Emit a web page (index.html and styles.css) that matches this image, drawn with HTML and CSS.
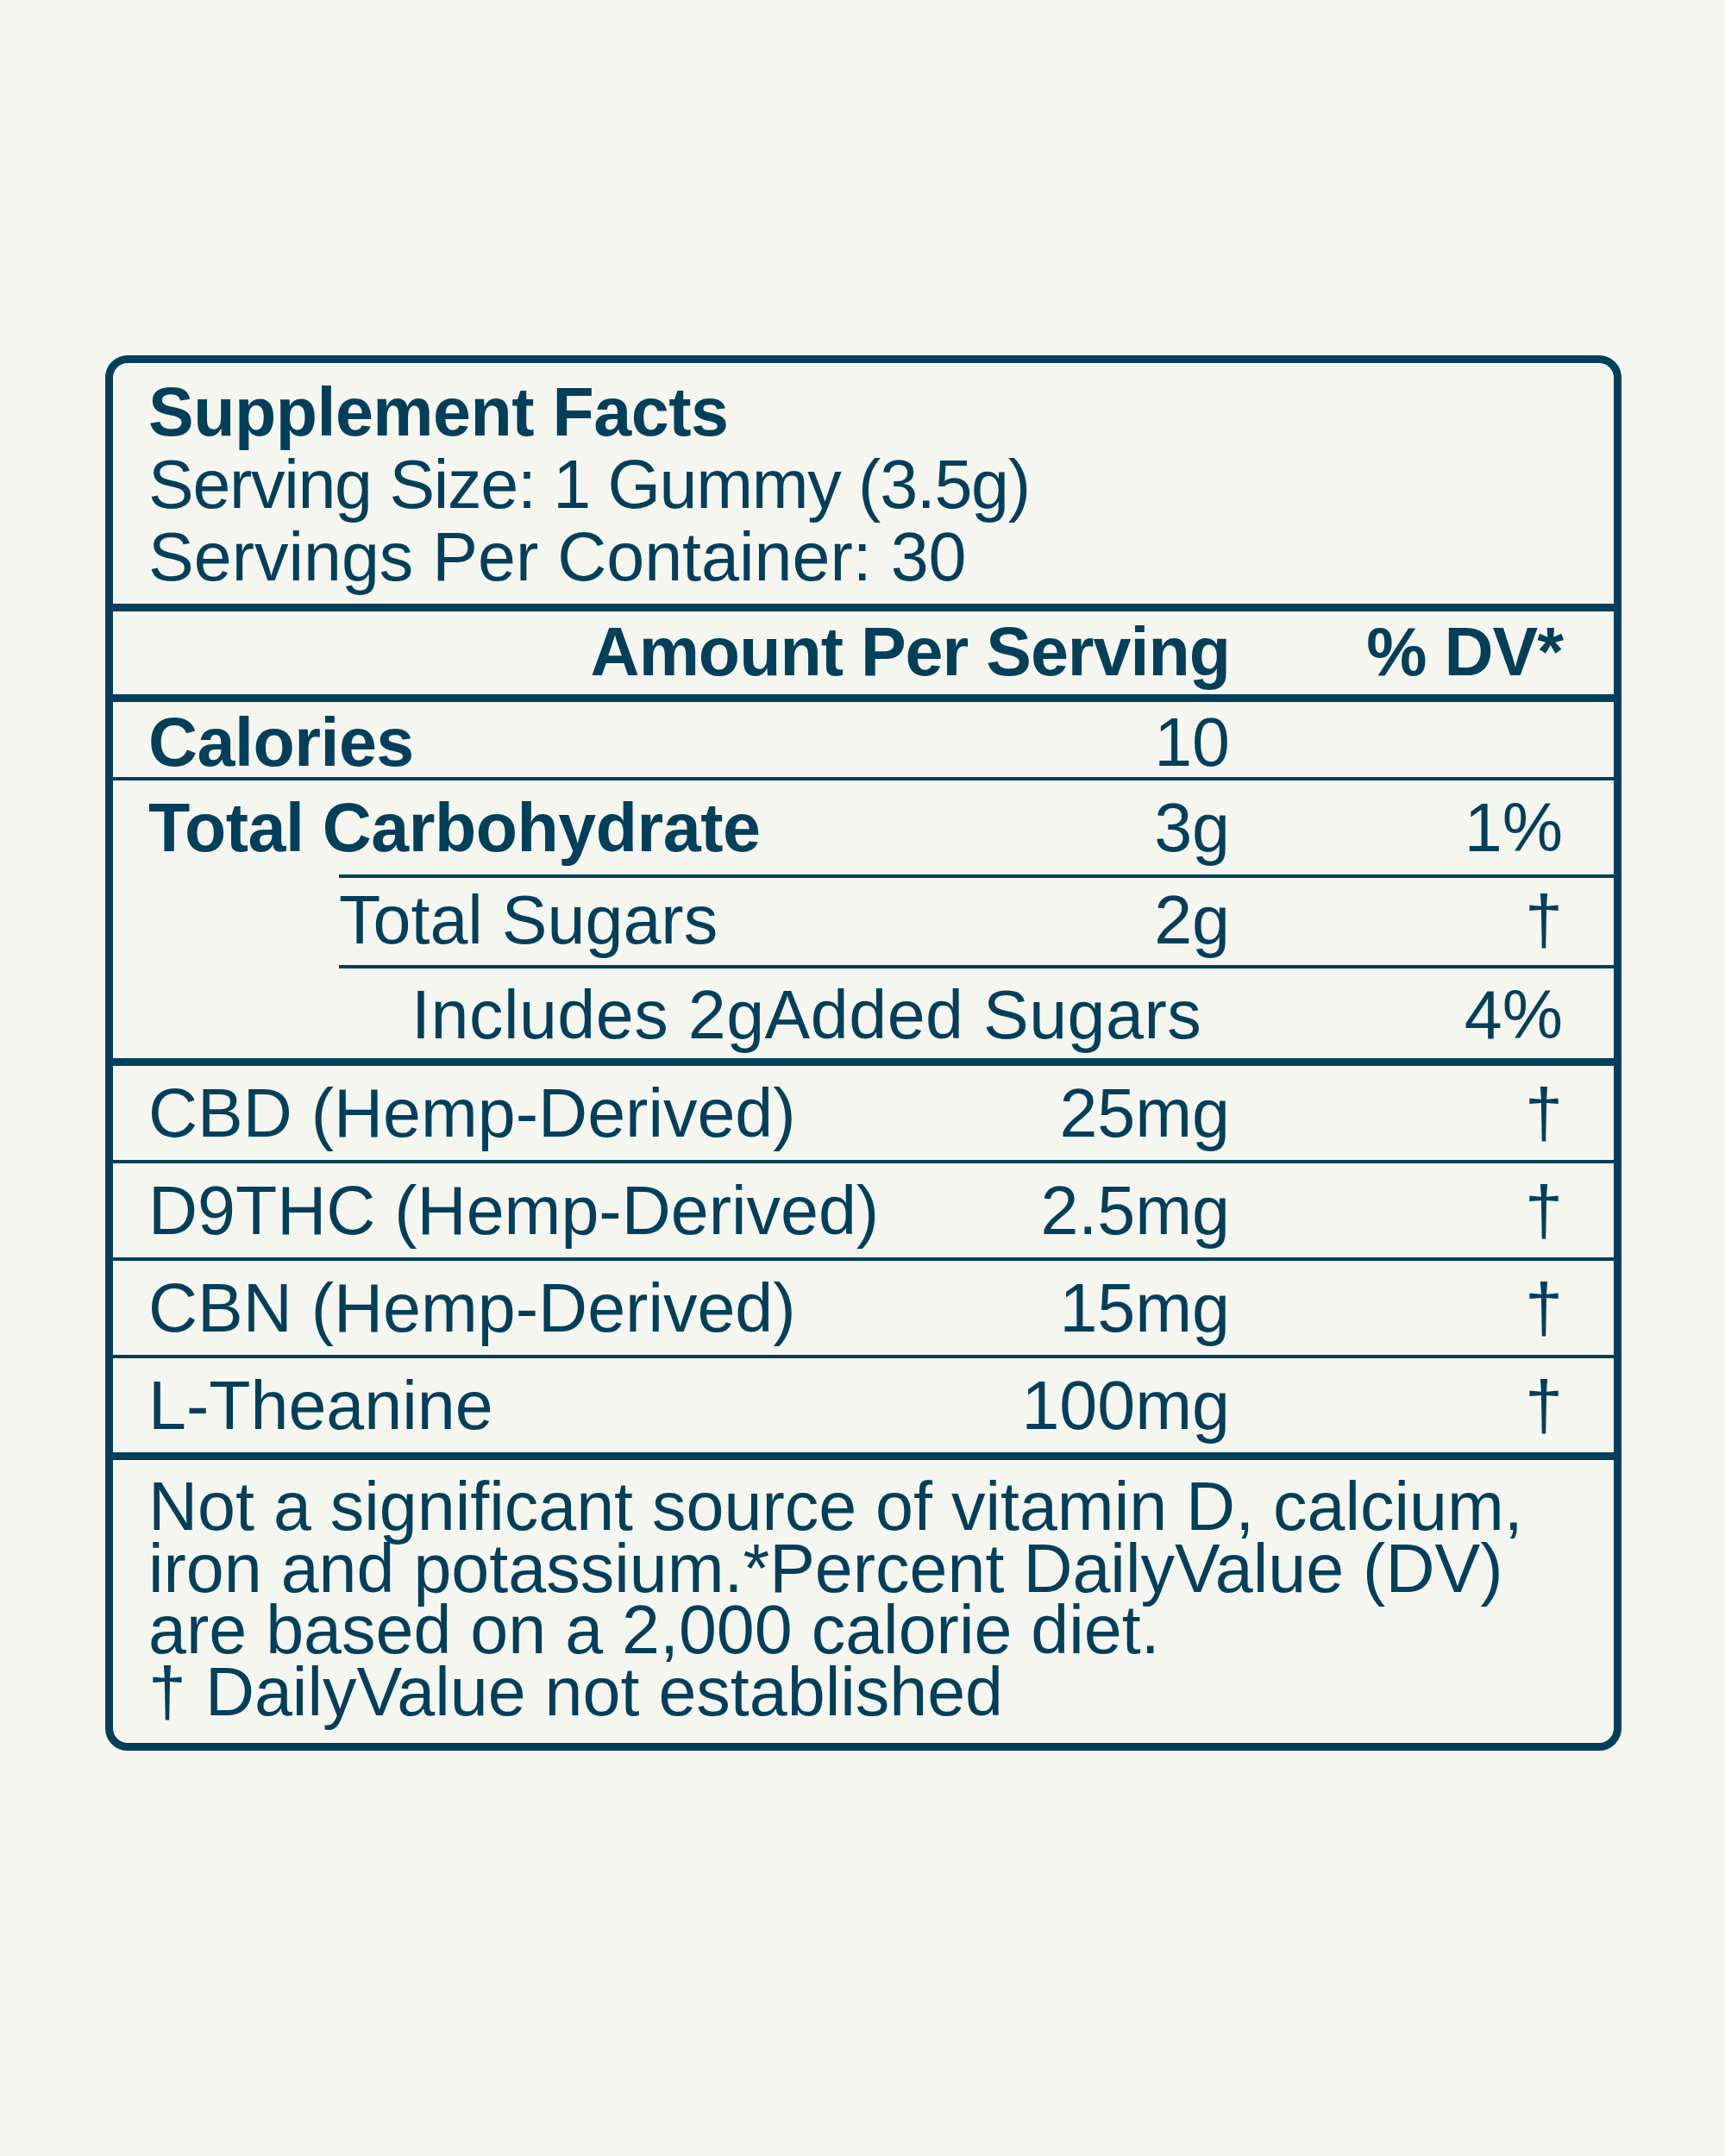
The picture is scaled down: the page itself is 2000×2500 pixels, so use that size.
FILE: index.html
```html
<!DOCTYPE html>
<html lang="en">
<head>
<meta charset="utf-8">
<title>Supplement Facts</title>
<link rel="stylesheet" href="styles.css">
</head>
<body>
<main class="page">
  <section class="facts">
    <header class="facts-head">
      <h1 class="title">Supplement Facts</h1>
      <p class="line tight">Serving Size: 1 Gummy (3.5g)</p>
      <p class="line">Servings Per Container: 30</p>
    </header>

    <div class="row colhead">
      <span class="label"></span>
      <span class="amt">Amount Per Serving</span>
      <span class="dv">% DV*</span>
    </div>

    <div class="macro">
      <div class="row calories">
        <span class="label strong">Calories</span>
        <span class="amt">10</span>
        <span class="dv"></span>
      </div>
      <div class="row carb">
        <span class="label strong">Total Carbohydrate</span>
        <span class="amt">3g</span>
        <span class="dv">1%</span>
      </div>
      <div class="sub">
        <div class="row sugars">
          <span class="label">Total Sugars</span>
          <span class="amt">2g</span>
          <span class="dv">†</span>
        </div>
        <div class="row added">
          <span class="label">Includes 2gAdded Sugars</span>
          <span class="amt"></span>
          <span class="dv">4%</span>
        </div>
      </div>
    </div>

    <div class="ingredients">
      <div class="row ing first">
        <span class="label">CBD (Hemp-Derived)</span>
        <span class="amt">25mg</span>
        <span class="dv">†</span>
      </div>
      <div class="row ing">
        <span class="label">D9THC (Hemp-Derived)</span>
        <span class="amt">2.5mg</span>
        <span class="dv">†</span>
      </div>
      <div class="row ing">
        <span class="label">CBN (Hemp-Derived)</span>
        <span class="amt">15mg</span>
        <span class="dv">†</span>
      </div>
      <div class="row ing">
        <span class="label">L-Theanine</span>
        <span class="amt">100mg</span>
        <span class="dv">†</span>
      </div>
    </div>

    <footer class="notes">
      <p>Not a significant source of vitamin D, calcium,<br>iron and potassium.*Percent DailyValue (DV)<br>are based on a 2,000 calorie diet.<br>† DailyValue not established</p>
    </footer>
  </section>
</main>
</body>
</html>
```

FILE: styles.css
```css
html, body {
  margin: 0;
  padding: 0;
  background: #f6f6f1;
}

body {
  font-family: "Liberation Sans", Arial, Helvetica, sans-serif;
  color: #023f5a;
}

.page {
  padding: 412px 0 0 122px;
}

.facts {
  box-sizing: border-box;
  width: 1758px;
  border: 9px solid #023f5a;
  border-radius: 26px;
  font-size: 79px;
  letter-spacing: 0;
}

.facts-head {
  padding: 15px 41px 12px;
  border-bottom: 9px solid #023f5a;
  line-height: 84px;
}

.title {
  margin: 0;
  font-size: 79px;
  font-weight: 700;
  line-height: 84px;
  letter-spacing: -0.5px;
}

.line {
  margin: 0;
}

.line.tight {
  letter-spacing: -1.3px;
}

.row {
  display: grid;
  grid-template-columns: 1fr auto 386px;
  padding: 14px 59px 14px 41px;
  line-height: 80px;
}

.amt,
.dv {
  text-align: right;
  white-space: nowrap;
}

.label {
  white-space: nowrap;
}

.strong {
  font-weight: 700;
  letter-spacing: -0.5px;
}

.colhead {
  font-weight: 700;
  letter-spacing: -1px;
  padding-top: 7px;
  padding-bottom: 9px;
  border-bottom: 9px solid #023f5a;
}

.calories {
  padding-top: 7px;
  padding-bottom: 0;
  border-bottom: 4px solid #023f5a;
}

.carb {
  padding-top: 15px;
  padding-bottom: 14px;
}

.sub {
  margin-left: 262px;
}

.sub .row {
  padding-left: 0;
  border-top: 4px solid #023f5a;
}

.sugars {
  padding-top: 9px;
  padding-bottom: 12px;
}

.added {
  padding-top: 14px;
  padding-bottom: 10px;
}

.added .label {
  padding-left: 84px;
  letter-spacing: 0.5px;
}

.ingredients {
  border-top: 9px solid #023f5a;
}

.ing {
  padding-top: 15px;
  padding-bottom: 14px;
  border-top: 4px solid #023f5a;
}

.ing.first {
  border-top: 0;
}

.notes {
  border-top: 9px solid #023f5a;
  padding: 18px 41px 24px;
}

.notes p {
  margin: 0;
  line-height: 71.5px;
}
```
